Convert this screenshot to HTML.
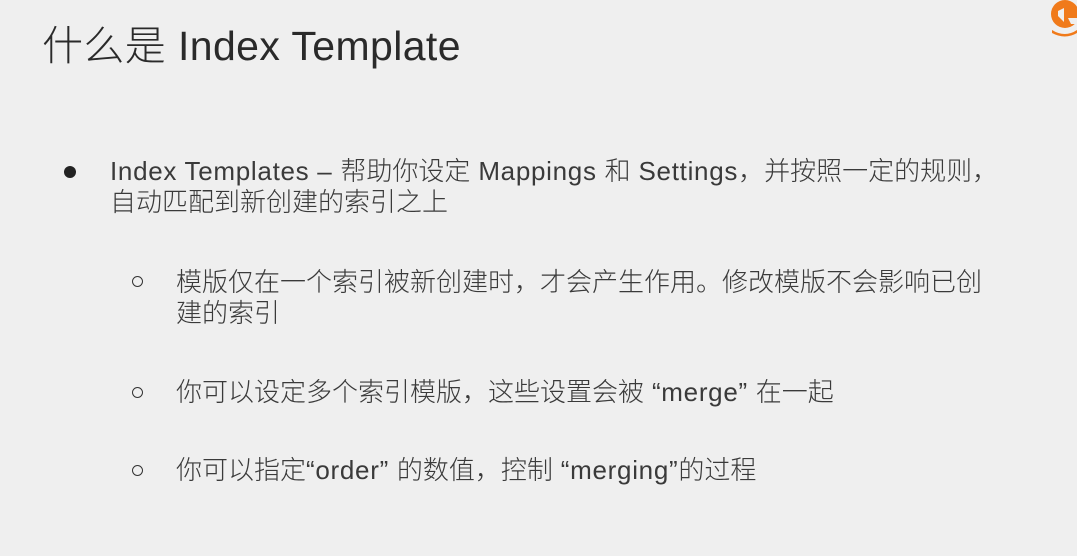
<!DOCTYPE html>
<html><head><meta charset="utf-8"><style>
body{margin:0;width:1077px;height:556px;background:#efefef;overflow:hidden;position:relative;font-family:"Liberation Sans","Noto Sans CJK SC",sans-serif;color:#3a3a3a;font-weight:300}
.t{position:absolute;white-space:nowrap}
h1{position:absolute;left:42px;top:12px;margin:0;font-size:41px;font-weight:300;color:#2a2a2a;white-space:nowrap;letter-spacing:0.4px}
.p{font-size:26px;line-height:31px}
.l{letter-spacing:0.7px}
.dot{position:absolute;width:12px;height:12px;border-radius:50%;background:#222}
.cir{position:absolute;width:9px;height:9px;border-radius:50%;border:1.5px solid #333}
</style></head><body>
<h1>什么是 Index Template</h1>
<svg style="position:absolute;left:1044px;top:0" width="33" height="40" viewBox="0 0 33 40">
<circle cx="21" cy="14" r="14" fill="#f07a1a"/>
<path d="M14 11 L20 8 L20 22 L14 16 Z" fill="#efefef"/>
<path d="M24 18 L33 18 L33 24 L27 24 Z" fill="#efefef"/>
<path d="M8 30 Q21 38 33 30 L33 33 Q21 40 8 33 Z" fill="#f07a1a"/>
</svg>
<div class="dot" style="left:64px;top:166px"></div>
<div class="t p" style="left:110px;top:156px"><span class="l">Index Templates – </span>帮助你设定<span class="l"> Mappings </span>和<span class="l"> Settings</span>，并按照一定的规则，<br>自动匹配到新创建的索引之上</div>
<div class="cir" style="left:132px;top:276px"></div>
<div class="t p" style="left:176px;top:267px">模版仅在一个索引被新创建时，才会产生作用。修改模版不会影响已创<br>建的索引</div>
<div class="cir" style="left:132px;top:387px"></div>
<div class="t p" style="left:176px;top:377px">你可以设定多个索引模版，这些设置会被<span class="l"> “merge” </span>在一起</div>
<div class="cir" style="left:132px;top:465px"></div>
<div class="t p" style="left:176px;top:455px">你可以指定<span class="l">“order” </span>的数值，控制<span class="l"> “merging”</span>的过程</div>
</body></html>
